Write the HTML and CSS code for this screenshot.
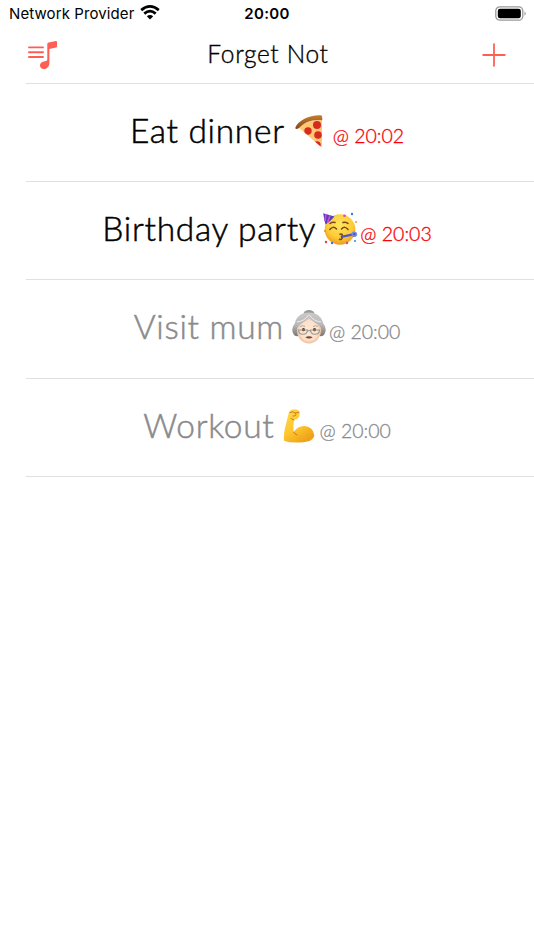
FILE: index.html
```
<!DOCTYPE html>
<html lang="en">
<head>
<meta charset="utf-8">
<title>Forget Not</title>
<link rel="stylesheet" href="styles.css">
</head>
<body>
<div class="status">
  <div class="carrier"><span>Network Provider</span>
    <svg width="20" height="15" viewBox="0 0 20 15" fill="none" stroke="#000" stroke-width="2.7"><path d="M1.2 5.1Q10-2.2 18.8 5.1M4.3 8.6Q10 3.8 15.7 8.6"/><path d="M6.8 11.2Q10 8.6 13.2 11.2L10 14.6Z" fill="#000" stroke="none"/></svg>
  </div>
  <div class="clock">20:00</div>
  <svg class="battery" width="32" height="16" viewBox="0 0 32 16"><rect x=".8" y=".8" width="27" height="13.4" rx="4" fill="none" stroke="#999" stroke-width="1.3"/><rect x="2.8" y="2.8" width="23" height="9.4" rx="2.2"/><path d="M29.5 5.2Q32 7.5 29.5 9.8Z" fill="#999"/></svg>
</div>
<header class="nav">
  <svg width="30" height="30" viewBox="0 0 30 30"><path d="M1 7.4H15M1 12.2H15M1 17H15" stroke="#ff5e55" stroke-width="1.9" stroke-linecap="round"/><path d="M19.3 4.1Q19.3 2.7 20.6 2.4L28 1.1Q29 1 29 2V6.2Q29 7.3 28 7.6L21.4 8.9V23C21.4 27 18.5 29 15.7 29C13.5 29 12 27.5 12 25.5C12 23.4 13.4 22.1 16 21.5L18 21Q19.3 20.7 19.3 19.4Z" fill="#ff5e55"/></svg>
  <h1>Forget Not</h1>
  <svg width="24" height="24" viewBox="0 0 24 24"><path d="M12 1.2V22.8M1.2 12H22.8" stroke="#ff5e55" stroke-width="1.8" stroke-linecap="round"/></svg>
</header>
<main class="list">
  <div class="row dinner"><span class="name">Eat dinner</span>
    <svg class="emoji" viewBox="0 0 36 36"><defs><linearGradient id="crust" x2="0" y2="1"><stop stop-color="#c77d2d"/><stop offset="1" stop-color="#81491b"/></linearGradient><clipPath id="slice"><path d="M6 14Q17 6 30 7V34L28 33Z"/></clipPath></defs><path d="M6 14Q17 6 30 7V34L28 33Z" fill="#ffc774"/><g clip-path="url(#slice)" fill="#d82b20"><circle cx="25" cy="12" r="4"/><circle cx="16" cy="18" r="3.7"/><circle cx="26" cy="22" r="3.8"/><circle cx="25" cy="32" r="3.8"/></g><path d="M3.2 15C6 7 19 1.5 29 2.3Q30.5 2.6 30.3 7.2C21 6 12 9 7 15Q4 17 3.2 15Z" fill="url(#crust)"/></svg>
    <span class="time">@ 20:02</span></div>
  <div class="row party"><span class="name">Birthday party</span>
    <svg class="emoji" viewBox="0 0 36 36"><defs><radialGradient id="face" cx=".5" cy=".35" r=".65"><stop stop-color="#ffe65e"/><stop offset=".65" stop-color="#fdcb37"/><stop offset="1" stop-color="#ec9c1c"/></radialGradient></defs><circle cx="18" cy="18.5" r="15.3" fill="url(#face)"/><path d="M1.2 2.2L12.5 5.5Q9 10 3.5 13.5Q2 8 1.2 2.2Z" fill="#5144bd"/><path d="M4 3L3 10M8 4.2L5.5 12" stroke="#d64ad1" stroke-width="1.6"/><g fill="none" stroke="#774518" stroke-width="1.5" stroke-linecap="round"><path d="M7.8 18.5Q11 14.5 14.5 18M19.5 18Q23 14.5 26 18.5M8 12.5Q10 10.5 13 11.5M21 11.5Q24 10.5 26 12.5"/><path d="M18 23.3Q21 22.5 20.3 25Q18.5 25 20.2 27Q19.6 29 17.5 28.2"/></g><path d="M19.5 25.8L31 23.3" stroke="#4658cb" stroke-width="2.3"/><circle cx="32.3" cy="23.2" r="2.8" fill="#7986e9"/><circle cx="32.3" cy="23.2" r="1.1" fill="#4052b8"/><g><circle cx="22.5" cy="4.8" r="1.3" fill="#d94b9b"/><circle cx="30" cy="3" r="1.2" fill="#3b77e0"/><circle cx="34" cy="11" r="1" fill="#f79324"/><circle cx="3" cy="20" r="1.1" fill="#f78a24"/><circle cx="4" cy="31" r="1.2" fill="#df4040"/><circle cx="10" cy="32" r="1.2" fill="#3d74df"/><circle cx="25" cy="32" r="1.2" fill="#d94b7b"/><circle cx="33" cy="30" r="1.1" fill="#478ae8"/></g></svg>
    <span class="time">@ 20:03</span></div>
  <div class="row done mum"><span class="name">Visit mum</span>
    <svg class="emoji" viewBox="0 0 36 36"><defs><linearGradient id="hair" x2="0" y2="1"><stop stop-color="#c9c9c9"/><stop offset=".5" stop-color="#bababa"/><stop offset="1" stop-color="#777"/></linearGradient><radialGradient id="skin"><stop stop-color="#ffe9d5"/><stop offset=".75" stop-color="#fce0c9"/><stop offset="1" stop-color="#efbd9b"/></radialGradient></defs><ellipse cx="18" cy="5" rx="5.5" ry="4" fill="#999"/><path d="M18 3.5C27 3.5 31 9 32 14Q37 20 33 26Q29 29 26 25H10Q7 29 3 26Q-1 20 4 14C5 9 9 3.5 18 3.5Z" fill="url(#hair)"/><path d="M6 19C8 15 14 13.5 18 8.5C22 13.5 28 15 30 19C31 28 25 34.5 18 34.5C11 34.5 5 28 6 19Z" fill="url(#skin)"/><path d="M6 13Q14 12 17.5 6M30 13Q22 12 18.5 6" fill="none" stroke="#eee"/><circle cx="12.5" cy="20.7" r="1.6" fill="#56331b"/><circle cx="23.5" cy="20.7" r="1.6" fill="#56331b"/><path d="M9 17.5Q11.5 16 14 17.5M22 17.5Q24.5 16 27 17.5" fill="none" stroke="#aaa"/><g fill="none" stroke="#9b9996" stroke-width="1.1"><path d="M7.5 21H16.5Q16.5 25.2 12 25.2T7.5 21ZM19.5 21H28.5Q28.5 25.2 24 25.2T19.5 21ZM16.5 22Q18 21 19.5 22"/></g><path d="M14.3 28.2Q18 26.5 21.7 28.2Q18 31 14.3 28.2Z" fill="#784131"/></svg>
    <span class="time">@ 20:00</span></div>
  <div class="row done workout"><span class="name">Workout</span>
    <svg class="emoji" viewBox="0 0 36 36"><defs><linearGradient id="arm" x2=".6" y2="1"><stop stop-color="#ffd84d"/><stop offset=".6" stop-color="#ffc62e"/><stop offset="1" stop-color="#eda21a"/></linearGradient></defs><path d="M8 4Q10 1 14.5 1.3Q18.5 1.8 18.8 5Q19 8.8 16 11L13 12Q12 18 12.5 24Q17 17.5 24 18Q32 19 33.3 27Q33 34 19 34.5Q9 35 3.3 33Q2.2 29 4 20Q6 12 8 4Z" fill="url(#arm)"/><path d="M12.5 24Q13.5 26 16 27M9 4.5Q12 2.5 14.5 5.3Q16 8.3 12 8M14.5 5L17.7 4.3M13 12L10 10.5" fill="none" stroke="#c47c12" stroke-width="1" stroke-linecap="round"/></svg>
    <span class="time">@ 20:00</span></div>
</main>
</body>
</html>
```
FILE: styles.css
```
* { box-sizing: border-box; }
body { margin: 0; background: #fff; color: #000; font-family: Lato, "Liberation Sans", sans-serif; }
svg { display: block; flex: none; }
.status { display: grid; grid-template-columns: 1fr 60px 1fr; align-items: center; height: 27px; padding: 0 7px 0 9px; font-family: Inter, sans-serif; font-size: 15px; }
.carrier { display: flex; align-items: center; gap: 6px; white-space: nowrap; letter-spacing: .1px; }
.carrier svg { margin-top: -2px; }
.clock { font-weight: 600; text-align: center; letter-spacing: .3px; margin-left: -2px; }
.battery { justify-self: end; }
.nav { display: flex; justify-content: space-between; align-items: center; height: 56px; padding: 0 28px 1px 28px; }
.nav h1 { margin: -1px 0 0 -4px; font-size: 24.5px; line-height: 32px; font-weight: 300; letter-spacing: .65px; -webkit-text-stroke: .35px; }
.list { margin-left: 26px; border-top: 1px solid #e0e0e0; }
.row { display: flex; justify-content: center; height: 98.2px; padding: 25px 26px 0 0; border-bottom: 1px solid #e0e0e0; white-space: nowrap; }
.name { font-size: 33.5px; line-height: 42px; font-weight: 300; letter-spacing: .7px; -webkit-text-stroke: .5px; }
.emoji { width: 36px; height: 36px; margin: 4px 0 0 7px; }
.time { margin: 13px 0 0 2px; font-size: 19.5px; line-height: 28px; font-weight: 300; letter-spacing: 0; color: #fb0007; -webkit-text-stroke: .3px; }
.dinner .time { margin-left: 5px; }
.party .emoji { margin-left: 6px; }
.done, .done .time { color: #8a8a8d; }
```
